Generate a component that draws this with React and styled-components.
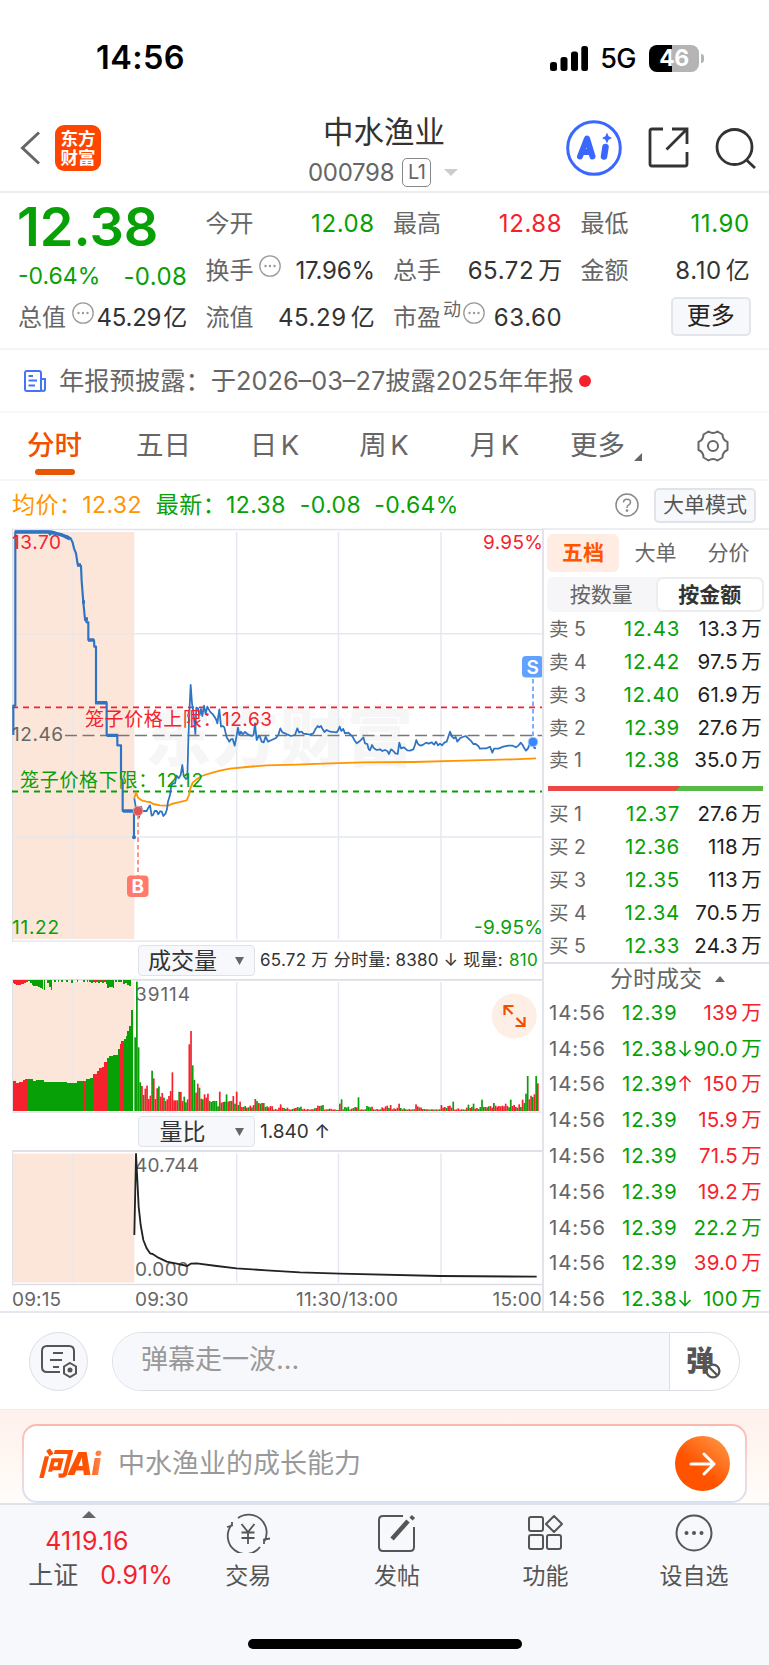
import React from "react";
import styled, { createGlobalStyle } from "styled-components";

const GREEN = "#07a007";
const RED = "#f5222d";
const ORANGE = "#f05000";
const GREY = "#666";
const DARK = "#333";
const FONT = `Inter, "Noto Sans CJK SC", sans-serif`;

const GlobalStyle = createGlobalStyle`
  * { box-sizing: border-box; }
  body {
    margin: 0;
    background: #fff;
    font-family: ${FONT};
    color: ${DARK};
  }
  svg { display: block; flex: none; }
`;

const Page = styled.div`
  width: 769px;
  height: 1665px;
  overflow: hidden;
  white-space: nowrap;
`;

const T = styled.span`
  font-size: ${p => p.size || 24}px;
  color: ${p => p.color || DARK};
  font-weight: ${p => p.weight || 400};
  letter-spacing: ${p => p.ls || 0}px;
  margin-left: ${p => p.ml || 0}px;
  margin-top: ${p => p.mt || 0}px;
  line-height: 1;
`;

/* status bar */
const StatusBar = styled.div`
  height: 107px;
  padding: 9px 65px 0 96px;
  display: flex;
  align-items: center;
  justify-content: space-between;
`;

const StatusRight = styled.div`
  display: flex;
  align-items: center;
`;

const Battery = styled.div`
  width: 50px;
  height: 27px;
  margin-left: 13px;
  border-radius: 8px;
  background: linear-gradient(90deg, #000 47%, #b4b4b4 47%);
  color: #fff;
  font-size: 23px;
  font-weight: 700;
  line-height: 27px;
  text-align: center;
  letter-spacing: -0.5px;
`;

const BatteryTip = styled.div`
  width: 3px;
  height: 9px;
  margin-left: 2px;
  border-radius: 0 3px 3px 0;
  background: #b4b4b4;
`;

/* header */
const Header = styled.header`
  height: 86px;
  border-bottom: 2px solid #ededed;
  padding: 0 12px 0 20px;
  display: grid;
  grid-template-columns: 240px 306px 1fr;
`;

const HeaderSide = styled.div`
  display: flex;
  align-items: center;
  gap: ${p => p.gap}px;
  height: 82px;
`;

const Logo = styled.div`
  width: 46px;
  height: 46px;
  border-radius: 9px;
  background: #ff4600;
  color: #fff;
  font-size: 17.5px;
  font-weight: 700;
  line-height: 19px;
  text-align: center;
  padding-top: 4px;
`;

const Title = styled.div`
  font-size: 30.5px;
  line-height: 36px;
  padding: 7px 0 0 63px;
`;

const SubTitle = styled.div`
  display: flex;
  align-items: center;
  padding-left: 48px;
  height: 31px;
  margin-top: 7px;
`;

const LevelTag = styled.div`
  width: 29px;
  height: 29px;
  margin: 0 13px 0 8px;
  border: 1.5px solid #888;
  border-radius: 5px;
  color: ${GREY};
  font-size: 20px;
  line-height: 26px;
  letter-spacing: -0.5px;
  text-align: center;
`;

/* quote */
const Quote = styled.section`
  height: 157px;
  padding: 7px 19px 0 18px;
  border-bottom: 2px solid #f4f4f4;
  display: grid;
  grid-template-columns: repeat(4, 169.3px);
  grid-template-rows: 47px 47px 47px;
  column-gap: 18.2px;
`;

const BigPrice = styled.div`
  color: ${GREEN};
  font-size: 54px;
  font-weight: 600;
  line-height: 53px;
  letter-spacing: 0;
  margin-left: -1px;
`;

const Cell = styled.div`
  display: flex;
  align-items: center;
  justify-content: space-between;
  padding-top: ${p => p.pt || 0}px;
`;

const Label = styled.div`
  display: flex;
  align-items: center;
  color: ${GREY};
  font-size: 24px;
  line-height: 46px;
  height: 46px;
  & svg {
    margin: -10px 0 0 6px;
  }
  & sup {
    font-size: 18px;
    line-height: 20px;
    margin: -16px -4px 0 2px;
  }
`;

const Value = styled.div`
  color: ${p => p.color || DARK};
  font-size: 24px;
  line-height: 46px;
  letter-spacing: ${p => (p.ls === undefined ? 0.6 : p.ls)}px;
  & span {
    margin-left: ${p => (p.ls === undefined ? 4 : 2)}px;
    letter-spacing: 0;
  }
`;

const MoreButton = styled.div`
  width: 80px;
  height: 39px;
  margin: -2px -1px 0 auto;
  border: 2px solid #e3e5ec;
  border-radius: 5px;
  background: #f7f8fb;
  color: #222;
  font-size: 24px;
  line-height: 34px;
  text-align: center;
`;

/* news */
const News = styled.section`
  height: 63px;
  padding-left: 24px;
  border-bottom: 2px solid #f7f7f7;
  display: flex;
  align-items: center;
`;

const Dot = styled.i`
  width: 12px;
  height: 12px;
  margin-left: 5px;
  border-radius: 50%;
  background: ${RED};
`;

/* period tabs */
const Tabs = styled.nav`
  height: 68px;
  border-bottom: 2px solid #f5f5f5;
  display: grid;
  grid-template-columns: 109px 109px 113px 106px 115px 98px 1fr;
`;

const Tab = styled.div`
  display: flex;
  flex-direction: column;
  align-items: center;
  padding-top: 14px;
  font-size: 27.5px;
  line-height: 36px;
  color: ${p => (p.active ? ORANGE : GREY)};
  font-weight: ${p => (p.active ? 500 : 400)};
  word-spacing: -4px;
  &::after {
    content: "";
    width: 40px;
    height: 6px;
    margin-top: 6px;
    border-radius: 3px;
    background: ${p => (p.active ? "#ea5504" : "transparent")};
  }
`;

const MoreTab = styled.div`
  display: flex;
  align-items: center;
  font-size: 27.5px;
  line-height: 36px;
  color: ${GREY};
  padding: 0 0 2px 18px;
  & svg { margin: 24px 0 0 9px; }
`;

const GearCell = styled.div`
  display: flex;
  align-items: center;
  padding-left: 47px;
`;

/* average / latest line */
const InfoLine = styled.div`
  height: 47px;
  padding: 1px 13px 0 12px;
  display: flex;
  align-items: center;
  & svg { margin-left: auto; }
`;

const ModeButton = styled.div`
  width: 102px;
  height: 35px;
  margin-left: 15px;
  border: 2px solid #e1e3ea;
  border-radius: 5px;
  background: #f7f8fb;
  color: #555;
  font-size: 21px;
  line-height: 30px;
  text-align: center;
`;

/* main area */
const Main = styled.section`
  height: 785px;
  border-bottom: 2px solid #e6e8ee;
  display: grid;
  grid-template-columns: 543px 226px;
  grid-template-rows: 783px;
`;

const Charts = styled.div`
  padding-left: 12px;
`;

const Toolbar = styled.div`
  height: ${p => p.h}px;
  display: flex;
  align-items: center;
  padding-left: 126px;
`;

const Picker = styled.div`
  flex: none;
  width: 117px;
  height: 31px;
  margin-right: 5px;
  border: 1.5px solid #e0e2e9;
  border-radius: 4px;
  background: #f7f8fb;
  display: flex;
  align-items: center;
  font-size: 23px;
  line-height: 28px;
  & span { width: 87px; text-align: center; }
  & svg { margin-left: 9px; }
`;

const TimeAxis = styled.div`
  height: 27px;
  padding-right: 1px;
  display: grid;
  grid-template-columns: 123px 161px 1fr auto;
  font-size: 19px;
  line-height: 28px;
  color: ${GREY};
  letter-spacing: 0.15px;
`;

/* order book */
const Side = styled.div`
  margin-left: -1px;
  border-left: 2px solid #e3e4ea;
  border-top: 2px solid #eceef2;
  overflow: hidden;
`;

const SideTabs = styled.div`
  height: 38px;
  margin: 4px 0 0 3px;
  display: grid;
  grid-template-columns: 72px 73px 73px;
  text-align: center;
  font-size: 21px;
  line-height: 37px;
  color: ${GREY};
`;

const SideTab = styled.div`
  border-radius: 6px;
  background: ${p => (p.active ? "#ffece3" : "none")};
  color: ${p => (p.active ? "#ff5500" : GREY)};
  font-weight: ${p => (p.active ? 700 : 400)};
`;

const Segment = styled.div`
  height: 35px;
  width: 217px;
  margin: 5px 0 1px 3px;
  border-radius: 6px;
  background: #f6f6f9;
  display: grid;
  grid-template-columns: 1fr 1fr;
`;

const SegmentItem = styled.div`
  border: 2px solid ${p => (p.active ? "#ededf0" : "transparent")};
  border-radius: 7px;
  background: ${p => (p.active ? "#fff" : "none")};
  color: ${p => (p.active ? DARK : GREY)};
  font-weight: ${p => (p.active ? 700 : 400)};
  font-size: 21px;
  line-height: 31px;
  text-align: center;
`;

const BookRow = styled.div`
  height: 32.85px;
  padding: 0 7px 0 5px;
  display: grid;
  grid-template-columns: 50px 81px 1fr;
  font-size: 20.5px;
  line-height: 32px;
  color: ${GREY};
  text-align: right;
  & b {
    font-weight: 400;
    text-align: left;
    font-size: 19.5px;
  }
  & em {
    font-style: normal;
    letter-spacing: 0.7px;
    color: ${GREEN};
  }
  & i {
    font-style: normal;
    color: #222;
    letter-spacing: 0.2px;
    word-spacing: -2.5px;
  }
`;

const Ratio = styled.div`
  height: 5px;
  width: 215px;
  margin: 9px 0 7px 4px;
  background: linear-gradient(135deg, #ec4747 60.3%, #58b946 60.3%);
`;

const DealsTitle = styled.div`
  height: 32px;
  border-top: 2px solid #dfe0e8;
  display: flex;
  align-items: center;
  padding-left: 66px;
  font-size: 23px;
  line-height: 28px;
  color: ${GREY};
  & svg { margin-left: 13px; }
`;

const DealRow = styled.div`
  height: 35.8px;
  padding: 0 7px 0 5px;
  display: grid;
  grid-template-columns: 73px 56px 15px 1fr;
  align-items: center;
  font-size: 20.5px;
  line-height: 35px;
  color: ${GREEN};
  letter-spacing: 0.8px;
  & time { color: ${GREY}; }
  & i {
    font-style: normal;
    text-align: right;
    letter-spacing: 0.2px;
    word-spacing: -2.5px;
    margin-left: -12px;
    color: ${p => p.color};
  }
`;

/* bullet comments */
const Bullet = styled.section`
  height: 97px;
  border-bottom: 1px solid #eceef2;
  padding: 0 29px;
  display: flex;
  align-items: center;
  justify-content: space-between;
`;

const RoundButton = styled.div`
  width: 59px;
  height: 59px;
  border: 1.5px solid #dcdee6;
  border-radius: 50%;
  background: #f7f8fb;
  display: flex;
  align-items: center;
  justify-content: center;
`;

const BulletInput = styled.div`
  width: 628px;
  height: 59px;
  border: 1.5px solid #dcdee6;
  border-radius: 30px;
  overflow: hidden;
  display: grid;
  grid-template-columns: 557px 1fr;
  line-height: 53px;
  & p {
    margin: 0;
    padding-left: 28px;
    font-size: 27px;
    color: #999;
    background: #f7f8fb;
    border-right: 1.5px solid #dcdee6;
  }
`;

const BulletSwitch = styled.div`
  display: flex;
  align-items: center;
  padding-left: 16px;
  & svg { margin: 20px 0 0 -9px; }
`;

/* AI banner */
const AiBanner = styled.section`
  height: 93px;
  padding: 14px 22px 0;
  background: linear-gradient(#fff1ee, #fff6f1 50%, #fffdfb);
`;

const AiCard = styled.div`
  height: 79px;
  padding: 0 15px 0 14px;
  border: 2.5px solid transparent;
  border-radius: 15px;
  background: linear-gradient(#fff, #fff) padding-box, linear-gradient(#fbb9ae, #f6d5d6 50%, #d8e1f4) border-box;
  display: flex;
  align-items: center;
`;

const AiName = styled.div`
  width: 80px;
  display: flex;
  font-size: 31px;
  font-weight: 900;
  font-style: italic;
  line-height: 40px;
  letter-spacing: -1px;
  color: transparent;
  background: linear-gradient(90deg, #ff5200 60%, #ff9a70 85%);
  background-clip: text;
`;

const SendButton = styled.div`
  width: 55px;
  height: 55px;
  margin-left: auto;
  border-radius: 50%;
  background: linear-gradient(220deg, #ff9440 8%, #ff5300 60%);
  display: flex;
  align-items: center;
  justify-content: center;
`;

/* bottom bar */
const BottomBar = styled.footer`
  height: 162px;
  border-top: 2px solid #dfe2e8;
  background: #f7f8fb;
`;

const BottomNav = styled.div`
  height: 134px;
  display: grid;
  grid-template-columns: 174px repeat(4, 148.6px);
`;

const NavItem = styled.div`
  display: flex;
  flex-direction: column;
  align-items: center;
  padding-top: 8px;
  font-size: 23px;
  line-height: 30px;
  color: #555;
  & svg { margin-bottom: 8px; }
`;

const IndexItem = styled.div`
  display: flex;
  flex-direction: column;
  align-items: center;
  padding: 6px 0 0 0;
  & svg { margin-left: 3px; }
`;

const IndexRow = styled.div`
  display: flex;
  align-items: center;
  gap: 22px;
  padding-left: 27px;
  margin-top: 9px;
`;

const HomeBar = styled.div`
  width: 274px;
  height: 10px;
  margin: 0 auto;
  border-radius: 5px;
  background: #000;
`;

const MoreDots = ({ size = 22, color = "#999" }) => (
  <svg width={size} height={size} viewBox="0 0 22 22">
    <circle cx="11" cy="11" r="10.2" fill="none" stroke={color} strokeWidth="1.3" />
    <circle cx="6.5" cy="11" r="1.2" fill={color} />
    <circle cx="11" cy="11" r="1.2" fill={color} />
    <circle cx="15.5" cy="11" r="1.2" fill={color} />
  </svg>
);

const Triangle = ({ w, h, up, color = GREY }) => (
  <svg width={w} height={h} viewBox="0 0 10 10" preserveAspectRatio="none">
    <path d={up ? "M5 0L10 10H0Z" : "M0 0H10L5 10Z"} fill={color} />
  </svg>
);

const quotes = [
  { label: "今开", value: "12.08", color: GREEN },
  { label: "最高", value: "12.88", color: RED },
  { label: "最低", value: "11.90", color: GREEN },
];

const sells = [
  ["卖 5", "12.43", "13.3 万"],
  ["卖 4", "12.42", "97.5 万"],
  ["卖 3", "12.40", "61.9 万"],
  ["卖 2", "12.39", "27.6 万"],
  ["卖 1", "12.38", "35.0 万"],
];

const buys = [
  ["买 1", "12.37", "27.6 万"],
  ["买 2", "12.36", "118 万"],
  ["买 3", "12.35", "113 万"],
  ["买 4", "12.34", "70.5 万"],
  ["买 5", "12.33", "24.3 万"],
];

const deals = [
  ["12.39", "", "139 万", RED],
  ["12.38", "down", "90.0 万", GREEN],
  ["12.39", "up", "150 万", RED],
  ["12.39", "", "15.9 万", RED],
  ["12.39", "", "71.5 万", RED],
  ["12.39", "", "19.2 万", RED],
  ["12.39", "", "22.2 万", GREEN],
  ["12.39", "", "39.0 万", RED],
  ["12.38", "down", "100 万", GREEN],
];

// curves are kept in thirds of a pixel
const auctionLine =
  "40,645 40,557 46,557 46,35 145,35 150,44 158,35 172,41 185,45 200,48 212,55 218,68 222,85 228,100 233,133 243,138 245,183 250,247 255,297 260,307 265,307 265,360 282,360 283,380 288,380 288,548 320,548 320,646 352,646 352,676 363,676 363,775 368,780 368,873 402,873 402,952";

const priceLine =
  "13,475 17,500 24,513 27,533 33,500 38,513 50,513 54,505 60,496 65,527 69,525 74,513 80,513 85,523 90,514 95,514 100,528 107,520 111,507 114,485 120,465 124,435 130,430 135,430 140,407 146,415 152,405 157,375 161,408 168,417 172,415 175,300 178,220 182,135 186,190 190,215 196,282 199,203 204,205 209,225 213,207 217,228 222,197 227,222 232,200 240,215 250,225 258,238 262,250 268,208 273,260 278,258 283,262 290,292 298,305 303,298 308,297 314,317 318,298 324,263 328,285 333,275 338,283 345,276 352,282 360,286 367,288 371,284 375,250 380,300 386,288 390,290 395,305 401,307 407,290 414,305 425,300 438,294 445,285 451,265 457,277 465,280 473,284 483,288 495,285 502,265 507,277 515,275 520,281 530,282 540,284 550,280 556,268 563,258 568,262 573,258 578,268 583,276 590,270 600,275 620,277 624,272 629,260 634,273 640,267 645,280 655,278 662,285 668,290 673,300 680,310 690,303 700,292 705,310 712,312 716,328 720,331 726,315 732,325 740,330 750,328 757,333 765,330 772,333 777,342 783,328 790,333 796,340 803,342 808,308 813,325 822,322 832,331 840,332 850,328 855,315 859,300 864,312 872,317 880,314 888,308 896,311 905,307 912,314 918,305 924,316 930,311 936,316 943,308 950,305 960,275 966,290 972,295 977,291 982,305 990,295 998,291 1007,288 1015,295 1025,305 1030,312 1037,312 1045,318 1050,326 1060,325 1070,325 1080,320 1087,338 1092,326 1105,326 1120,320 1135,317 1148,317 1158,322 1166,316 1172,308 1178,315 1183,325 1188,332 1194,325 1200,310 1209,305 1212,323 1218,325";

const averageLine =
  "13,475 18,457 24,473 35,481 50,485 60,486 70,492 90,496 115,497 125,492 145,487 170,481 177,465 181,445 188,428 200,418 215,408 240,400 270,392 300,386 350,381 410,376 500,374 600,370 700,367 850,366 1000,362 1150,358 1218,355";

const ratioLine =
  "403,915 408,672 412,750 416,830 422,885 430,930 440,955 450,970 458,972 475,983 500,995 530,1001 562,1008 572,1001 590,1000 650,1008 710,1015 800,1021 900,1027 1020,1031 1320,1038 1610,1040";

// call auction: [end x, top y, is red]
const auctionVolume = [
  [48, 454, 1], [58, 458, 1], [68, 457, 1], [75, 450, 1], [82, 448, 1],
  [98, 446, 0], [108, 452, 0], [132, 450, 0], [158, 455, 0], [202, 455, 0],
  [232, 458, 0], [252, 453, 0], [258, 452, 1], [270, 447, 0], [278, 443, 0],
  [290, 431, 1], [297, 423, 1], [305, 414, 1], [312, 410, 1], [322, 396, 1],
  [328, 383, 0], [340, 378, 0], [354, 375, 0], [359, 357, 0], [364, 341, 1],
  [371, 334, 1], [377, 327, 0], [382, 317, 0], [388, 304, 0], [393, 289, 0], [399, 241, 0],
];

const hanging = [
  [38, 8, 1], [43, 10, 1], [48, 15, 1], [53, 13, 1], [58, 14, 1], [63, 12, 1], [68, 11, 1], [73, 7, 1], [78, 4, 1],
  [85, 3, 0], [90, 8, 0], [95, 13, 0], [100, 16, 0], [105, 17, 0], [110, 16, 0], [115, 19, 0], [120, 24, 0], [125, 25, 0], [131, 28, 0],
  [142, 8, 0], [147, 20, 0], [152, 28, 0], [162, 4, 0], [173, 5, 0], [184, 5, 0], [198, 5, 0], [214, 8, 0], [230, 4, 0], [250, 5, 0],
  [260, 4, 0], [268, 5, 0], [274, 7, 0], [279, 6, 1], [284, 7, 1], [289, 6, 1], [294, 7, 0], [300, 4, 1], [306, 8, 0], [312, 6, 1], [317, 12, 0],
  [322, 22, 0], [328, 20, 0], [333, 20, 0], [338, 22, 0], [345, 6, 0], [355, 6, 0], [361, 4, 0], [370, 10, 0], [376, 8, 0], [382, 15, 0], [387, 17, 0],
];

// minute volumes, negative when the minute closed lower
const minuteVolume = [
  -221, -388, -191, -86, 75, -48, 67, 76, 36, 46, -121, 98, 36, 68, -74, 43, 54, -40, 30, 35, 45, 60, 116, 32,
  32, 32, -58, 57, 30, -43, -26, 35, 200, 240, -137, -93, 55, 82, -70, 37, -35, 50, 40, 52, -30, -27, -30, -30,
  -30, -14, 58, -25, 27, -28, -50, 28, -30, 30, 45, -22, 58, -18, 28, 12, 12, -15, 10, -11, 16, -11, 18, 36,
  -30, 24, -22, 24, -24, 12, -14, 11, 15, 14, -4, 6, 4, 10, 20, 10, -9, -6, 10, 5, 4, -6, 8, 9, -12, -10,
  -13, 5, 7, 4, -6, 4, 5, 5, -8, 9, 16, 15, -16, -18, 4, 5, -5, 7, 6, 4, 5, -3, 3, 22,
  -35, 5, -12, -10, -13, 4, -7, 9, -12, 11, -41, 4, 5, -4, 5, -15, -13, -11, 13, 5, -4, 6, 4, -5, 11,
  8, 14, 16, -9, 18, 5, 8, -6, 10, 22, -9, 5, -8, 5, -4, 6, 4, -5, 5, 20, 14, -11, 10,
  6, -6, 5, -5, 4, -5, 5, -4, 5, -4, -5, 18, 10, 12, -9, 15, 16, 10, -28, 4, 5, 8,
  4, -5, 5, -4, 10, -19, 9, -12, -22, 7, 9, -6, -12, -34, 12, -12, 11, -14, 15, 10, -24, 16, 13, 15,
  14, 16, 14, 22, 15, -11, -34, 15, 18, -12, 10, 20,
  -12, 34, -24, -52, -105, 35, 46, -42, 50, -105, 83,
];

const verticals = [73, 236.7, 338.5, 441];

const Grid = ({ top, bottom }) => (
  <g>
    <rect x="12" y={top} width="122.3" height={bottom - top} fill="#fce6da" />
    {verticals.map(x => (
      <path key={x} d={`M${x} ${top}V${bottom}`} stroke="#e4e8f0" strokeWidth="1.5" />
    ))}
  </g>
);

const PriceChart = () => (
  <svg width="531" height="414" viewBox="12 528 531 414" fontFamily={FONT} fontSize="19">
    <text x="145" y="761" fontSize="66" fontWeight="900" fill="#f6f6f6" textLength="268">
      东方财富
    </text>
    <Grid top={532} bottom={939} />
    <path d="M12 529.5H543M12 941.2H543" stroke="#e1e3e9" strokeWidth="1.3" />
    <path d="M12.5 529V942" stroke="#dfe2ea" />
    <path d="M12 633.7H543M12 837H543" stroke="#e4e8f0" strokeWidth="1.5" />
    <path d="M65 735.4H543" stroke="#777" strokeWidth="1.5" strokeDasharray="12 5.5" />
    <path d="M12 707.4H543" stroke={RED} strokeWidth="1.8" strokeDasharray="6 5" />
    <path d="M12 791.5H543" stroke={GREEN} strokeWidth="1.8" strokeDasharray="6 5" />
    <g fill="none" strokeLinejoin="round">
      <polyline points={auctionLine} transform="translate(0 520) scale(.33333)" stroke="#2f74c3" strokeWidth="6.5" />
      <path
        d="M15 532H50L62 535L70 539M95 702.7H107M107 735.4H118M123 811H134M77 565H81M82 602H85M84 619H88M88 640H94"
        stroke="#2f74c3"
        strokeWidth="3.4"
      />
      <g transform="translate(130 640) scale(.33333)">
        <polyline points={averageLine} stroke="#ff9500" strokeWidth="5.5" />
        <polyline points={priceLine} stroke="#2f74c3" strokeWidth="5.3" />
      </g>
    </g>
    <circle cx="134" cy="837.3" r="2" fill="#2f74c3" />
    <path d="M138 815V876" stroke="#ff7a68" strokeWidth="1.6" strokeDasharray="4.5 3" />
    <circle cx="138" cy="811" r="4.8" fill="#d9595b" stroke="#e9a3a3" />
    <rect x="127" y="875.5" width="21.5" height="21.5" rx="4" fill="#ff7a68" />
    <text x="137.8" y="893" fontSize="19" fontWeight="700" fill="#fff" textAnchor="middle">B</text>
    <path d="M533 679V738" stroke="#5b9dff" strokeWidth="1.6" strokeDasharray="4.5 3" />
    <circle cx="533" cy="742" r="4.8" fill="#3b86ff" stroke="#a5c8ff" />
    <rect x="522" y="656" width="21.5" height="21.5" rx="4" fill="#62a1ff" />
    <text x="532.8" y="674" fontSize="19" fontWeight="600" fill="#fff" textAnchor="middle">S</text>
    <text x="12" y="548.6" fill={RED} textLength="49">13.70</text>
    <text x="543" y="548.6" fill={RED} textAnchor="end" textLength="60">9.95%</text>
    <text x="12" y="741" fill={GREY} textLength="51">12.46</text>
    <text x="12" y="934" fill={GREEN} textLength="47">11.22</text>
    <text x="543" y="934" fill={GREEN} textAnchor="end" textLength="69">-9.95%</text>
    <text x="85" y="726" fill={RED} textLength="187">笼子价格上限：12.63</text>
    <text x="20" y="787" fill={GREEN} textLength="183">笼子价格下限：12.12</text>
  </svg>
);

const VolumeChart = () => (
  <svg width="531" height="134" viewBox="12 979 531 134" fontFamily={FONT} fontSize="19">
    <Grid top={982} bottom={1111} />
    <path d="M12 979.8H543" stroke="#dcdee6" strokeWidth="1.8" />
    <path d="M12 1112.2H543" stroke="#e6e8ee" strokeWidth="1.5" />
    <path d="M12.5 980V1112" stroke="#dfe2ea" />
    <g transform="translate(0 930) scale(.33333)" shapeRendering="crispEdges">
      {auctionVolume.map(([end, top, red], i) => {
        const start = i ? auctionVolume[i - 1][0] : 38;
        return <rect key={end} x={start} y={top} width={end - start} height={543 - top} fill={red ? RED : GREEN} />;
      })}
      {hanging.map(([x, h, red]) => (
        <rect key={x} x={x} y="151" width="5.4" height={h} fill={red ? RED : GREEN} />
      ))}
    </g>
    <g transform="translate(0 930) scale(.33333)">
      {minuteVolume.map((v, i) => {
        const h = Math.abs(v);
        const step = 1208 / (minuteVolume.length - 1);
        return <rect key={i} x={403 + i * step} y={543 - h} width="5.1" height={h} fill={v > 0 ? RED : GREEN} />;
      })}
    </g>
    <text x="135" y="1001" fill={GREY} textLength="55">39114</text>
    <circle cx="514.3" cy="1016" r="22.5" fill="#fdeee6" />
    <g fill="none" stroke={ORANGE} strokeWidth="2.2">
      <path d="M504.5 1015V1006H513.5M505 1006.5L512.5 1014" />
      <path d="M524.5 1017V1026H515.5M524 1025.5L516.5 1018" />
    </g>
  </svg>
);

const RatioChart = () => (
  <svg width="531" height="136" viewBox="12 1150 531 136" fontFamily={FONT} fontSize="19">
    <Grid top={1153.5} bottom={1282.5} />
    <path d="M12 1151H543" stroke="#dfe0e8" strokeWidth="2" />
    <path d="M12 1284.5H543" stroke="#dcdee4" strokeWidth="1.5" />
    <path d="M12.5 1151V1284" stroke="#dfe2ea" />
    <text x="135" y="1172" fill={GREY} textLength="64">40.744</text>
    <text x="135" y="1275.5" fill={GREY} textLength="54">0.000</text>
    <polyline
      points={ratioLine}
      transform="translate(0 930) scale(.33333)"
      fill="none"
      stroke="#222"
      strokeWidth="5.5"
      strokeLinejoin="round"
    />
  </svg>
);

const Arrow = ({ dir, color = "currentColor", size = 14 }) => (
  <svg width={size} height="17" viewBox="0 0 14 17" fill="none" stroke={color} strokeWidth="1.6">
    <path d={dir === "up" ? "M7 16V1.5M1.5 7L7 1.5L12.5 7" : "M7 1V15.5M1.5 10L7 15.5L12.5 10"} />
  </svg>
);

const Book = ({ rows }) =>
  rows.map(([name, price, amount]) => (
    <BookRow key={name}>
      <b>{name}</b>
      <em>{price}</em>
      <i>{amount}</i>
    </BookRow>
  ));

const App = () => (
  <Page>
    <GlobalStyle />
    <StatusBar>
      <T size={32.5} weight={600} color="#000" ls={0.4}>14:56</T>
      <StatusRight>
        <svg width="38" height="25" viewBox="0 0 38 25">
          <rect x="0" y="16" width="7" height="9" rx="2.5" />
          <rect x="10.5" y="11" width="7" height="14" rx="2.5" />
          <rect x="21" y="5.5" width="7" height="19.5" rx="2.5" />
          <rect x="31.3" y="0" width="6.7" height="25" rx="2.5" />
        </svg>
        <T size={27} weight={500} color="#000" ls={-0.5} ml={12}>5G</T>
        <Battery>46</Battery>
        <BatteryTip />
      </StatusRight>
    </StatusBar>

    <Header>
      <HeaderSide gap={14}>
        <svg width="21" height="34" viewBox="0 0 21 34" fill="none" stroke="#666" strokeWidth="3">
          <path d="M19 1.5L2.5 17L19 32.5" />
        </svg>
        <Logo>东方<br />财富</Logo>
      </HeaderSide>
      <div>
        <Title>中水渔业</Title>
        <SubTitle>
          <T size={24} color={GREY} ls={-0.3}>000798</T>
          <LevelTag>L1</LevelTag>
          <Triangle w={14} h={7} color="#ccc" />
        </SubTitle>
      </div>
      <HeaderSide gap={25.5}>
        <svg width="56" height="56" viewBox="0 0 56 56">
          <circle cx="28" cy="28" r="26.3" fill="none" stroke="#3a67ff" strokeWidth="3" />
          <g fill="none" stroke="#3a67ff" strokeLinecap="round" strokeLinejoin="round">
            <path d="M14 36.5L21 18.5L26.5 36.5M17 32H25" strokeWidth="6" />
            <path d="M39.5 27L38 36.5" strokeWidth="6.5" />
          </g>
          <path d="M41 12.5L42.6 16.2L46 18L42.6 19.8L41 23.5L39.4 19.8L36 18L39.4 16.2Z" fill="#3a67ff" />
        </svg>
        <svg width="42" height="42" viewBox="0 0 42 42" fill="none" stroke="#333" strokeWidth="2.8">
          <path d="M15 2H4Q2 2 2 4V37Q2 39 4 39H37Q39 39 39 37V25M24 2H39V17M38.5 2.5L18.5 22.5" />
        </svg>
        <svg width="42" height="42" viewBox="0 0 42 42" fill="none" stroke="#333" strokeWidth="2.8">
          <circle cx="19.5" cy="20" r="17.5" />
          <path d="M31.5 33L40 41" />
        </svg>
      </HeaderSide>
    </Header>

    <Quote>
      <BigPrice>12.38</BigPrice>
      {quotes.map(q => (
        <Cell key={q.label}>
          <Label>{q.label}</Label>
          <Value color={q.color}>{q.value}</Value>
        </Cell>
      ))}
      <Cell pt={12}>
        <T size={23} color={GREEN}>-0.64%</T>
        <T size={24} color={GREEN} ls={0.4}>-0.08</T>
      </Cell>
      <Cell>
        <Label>换手<MoreDots /></Label>
        <Value ls={-0.2}>17.96%</Value>
      </Cell>
      <Cell>
        <Label>总手</Label>
        <Value>65.72<span>万</span></Value>
      </Cell>
      <Cell>
        <Label>金额</Label>
        <Value>8.10<span>亿</span></Value>
      </Cell>
      <Cell>
        <Label>总值<MoreDots /></Label>
        <Value ls={-0.2}>45.29<span>亿</span></Value>
      </Cell>
      <Cell>
        <Label>流值</Label>
        <Value>45.29<span>亿</span></Value>
      </Cell>
      <Cell>
        <Label>市盈<sup>动</sup><MoreDots /></Label>
        <Value>63.60</Value>
      </Cell>
      <Cell>
        <MoreButton>更多</MoreButton>
      </Cell>
    </Quote>

    <News>
      <svg width="22" height="22" viewBox="0 0 22 22" fill="none" stroke="#4673f5" strokeWidth="2">
        <path d="M17 21H3Q1 21 1 19V3Q1 1 3 1H15Q17 1 17 3V19Q17 21 19 21Q21 21 21 19V9H17M4.5 6H9M4.5 10.5H13M4.5 15.5H11" />
      </svg>
      <T size={25.3} color={GREY} ml={13}>年报预披露：于2026–03–27披露2025年年报</T>
      <Dot />
    </News>

    <Tabs>
      <Tab active>分时</Tab>
      <Tab>五日</Tab>
      <Tab>日 K</Tab>
      <Tab>周 K</Tab>
      <Tab>月 K</Tab>
      <MoreTab>
        更多
        <svg width="8" height="8" viewBox="0 0 8 8"><path d="M8 0V8H0Z" fill={GREY} /></svg>
      </MoreTab>
      <GearCell>
        <svg width="32" height="32" viewBox="0 0 32 32" fill="none" stroke={GREY} strokeWidth="2" strokeLinejoin="round">
          <path d="M11.5 1.5Q16 4.5 20.5 1.5L25.5 4.5Q25.5 10 30.5 12V20Q25.5 22 25.5 27.5L20.5 30.5Q16 27.5 11.5 30.5L6.5 27.5Q6.5 22 1.5 20V12Q6.5 10 6.5 4.5Z" />
          <circle cx="16" cy="16" r="5" />
        </svg>
      </GearCell>
    </Tabs>

    <InfoLine>
      <T size={23} color="#ff9500" ls={0.4}>均价：12.32</T>
      <T size={23} color={GREEN} ls={0.4} ml={14}>最新：12.38</T>
      <T size={23} color={GREEN} ls={0.4} ml={14}>-0.08</T>
      <T size={23} color={GREEN} ls={0.4} ml={13}>-0.64%</T>
      <svg width="24" height="24" viewBox="0 0 24 24" fill="none" stroke="#888" strokeWidth="1.5">
        <circle cx="12" cy="12" r="11" />
        <path d="M8.5 9.5Q8.5 6.2 12 6.2Q15.5 6.2 15.5 9.3Q15.5 11 13.5 12.2Q12 13 12 15" />
        <circle cx="12" cy="17.6" r=".6" />
      </svg>
      <ModeButton>大单模式</ModeButton>
    </InfoLine>

    <Main>
      <Charts>
        <PriceChart />
        <Toolbar h={37}>
          <Picker><span>成交量</span><Triangle w={9} h={8} /></Picker>
          <T size={17} ls={0.25}>65.72 万 分时量: 8380 ↓ 现量: </T>
          <T size={17} color={GREEN} ls={0.25} ml={6}>810</T>
        </Toolbar>
        <VolumeChart />
        <Toolbar h={37}>
          <Picker><span>量比</span><Triangle w={9} h={8} /></Picker>
          <T size={19}>1.840 ↑</T>
        </Toolbar>
        <RatioChart />
        <TimeAxis>
          <span>09:15</span>
          <span>09:30</span>
          <span>11:30/13:00</span>
          <span>15:00</span>
        </TimeAxis>
      </Charts>
      <Side>
        <SideTabs>
          <SideTab active>五档</SideTab>
          <SideTab>大单</SideTab>
          <SideTab>分价</SideTab>
        </SideTabs>
        <Segment>
          <SegmentItem>按数量</SegmentItem>
          <SegmentItem active>按金额</SegmentItem>
        </Segment>
        <Book rows={sells} />
        <Ratio />
        <Book rows={buys} />
        <DealsTitle>分时成交<Triangle w={10} h={6} up /></DealsTitle>
        {deals.map(([price, dir, amount, color], i) => (
          <DealRow key={i} color={color}>
            <time>14:56</time>
            <span>{price}</span>
            <span>{dir && <Arrow dir={dir} color={color} />}</span>
            <i>{amount}</i>
          </DealRow>
        ))}
      </Side>
    </Main>

    <Bullet>
      <RoundButton>
        <svg width="38" height="36" viewBox="0 0 38 36" fill="none" stroke="#555" strokeWidth="2">
          <path d="M20 29H7Q2 29 2 24V8Q2 3 7 3H29Q34 3 34 8V18M13 10H23M10 17H22M13 24H19" />
          <path d="M30 20L36 23.5V30.5L30 34L24 30.5V23.5Z" />
          <circle cx="30" cy="27" r="1.5" fill="#555" />
        </svg>
      </RoundButton>
      <BulletInput>
        <p>弹幕走一波...</p>
        <BulletSwitch>
          <T size={28} weight={900} color="#555">弹</T>
          <svg width="16" height="16" viewBox="0 0 15 15">
            <circle cx="7.5" cy="7.5" r="6" fill="#fff" stroke="#555" strokeWidth="2.2" />
            <path d="M3.5 3.5L11.5 11.5" stroke="#555" strokeWidth="2.2" />
          </svg>
        </BulletSwitch>
      </BulletInput>
    </Bullet>

    <AiBanner>
      <AiCard>
        <AiName>问Ai</AiName>
        <T size={27} color="#999">中水渔业的成长能力</T>
        <SendButton>
          <svg width="27" height="24" viewBox="0 0 27 24" fill="none" stroke="#fff" strokeWidth="3" strokeLinecap="round" strokeLinejoin="round">
            <path d="M2 12H25M15 2L25 12L15 22" />
          </svg>
        </SendButton>
      </AiCard>
    </AiBanner>

    <BottomBar>
      <BottomNav>
        <IndexItem>
          <Triangle w={14} h={7} up />
          <T size={25} color={RED} ls={0.3} mt={11}>4119.16</T>
          <IndexRow>
            <T size={25} color="#555">上证</T>
            <T size={25} color={RED}>0.91%</T>
          </IndexRow>
        </IndexItem>
        <NavItem>
          <svg width="44" height="40" viewBox="0 0 44 40" fill="none" stroke="#555" strokeWidth="1.8">
            <path d="M12 5A18 18 0 0 1 38.5 28M38 31V26.5L44 25.5M34 34A18 18 0 0 1 5.5 12M1 14L6 12.5V9" />
            <path d="M15.5 11L22 19L28.5 11M22 19V31M15.5 19.5H28.5M15.5 25H28.5" />
          </svg>
          交易
        </NavItem>
        <NavItem>
          <svg width="40" height="40" viewBox="0 0 40 40" fill="none" stroke="#555" strokeWidth="2">
            <path d="M26 3H6Q2 3 2 7V34Q2 38 6 38H33Q37 38 37 34V14" />
            <path d="M15 26L31 8" strokeWidth="4.5" />
            <path d="M34 6L36.5 3.5" strokeWidth="4.5" />
          </svg>
          发帖
        </NavItem>
        <NavItem>
          <svg width="36" height="40" viewBox="0 0 36 40" fill="none" stroke="#555" strokeWidth="2">
            <rect x="2" y="4" width="14" height="14" rx="2" />
            <rect x="2" y="22" width="14" height="14" rx="2" />
            <rect x="20" y="22" width="14" height="14" rx="2" />
            <path d="M27 3L35 11L27 19L19 11Z" strokeLinejoin="round" />
          </svg>
          功能
        </NavItem>
        <NavItem>
          <svg width="38" height="40" viewBox="0 0 38 40">
            <circle cx="19" cy="20" r="17.5" fill="none" stroke="#555" strokeWidth="2" />
            <circle cx="11.5" cy="20" r="2" fill="#555" />
            <circle cx="19" cy="20" r="2" fill="#555" />
            <circle cx="26.5" cy="20" r="2" fill="#555" />
          </svg>
          设自选
        </NavItem>
      </BottomNav>
      <HomeBar />
    </BottomBar>
  </Page>
);

export default App;
